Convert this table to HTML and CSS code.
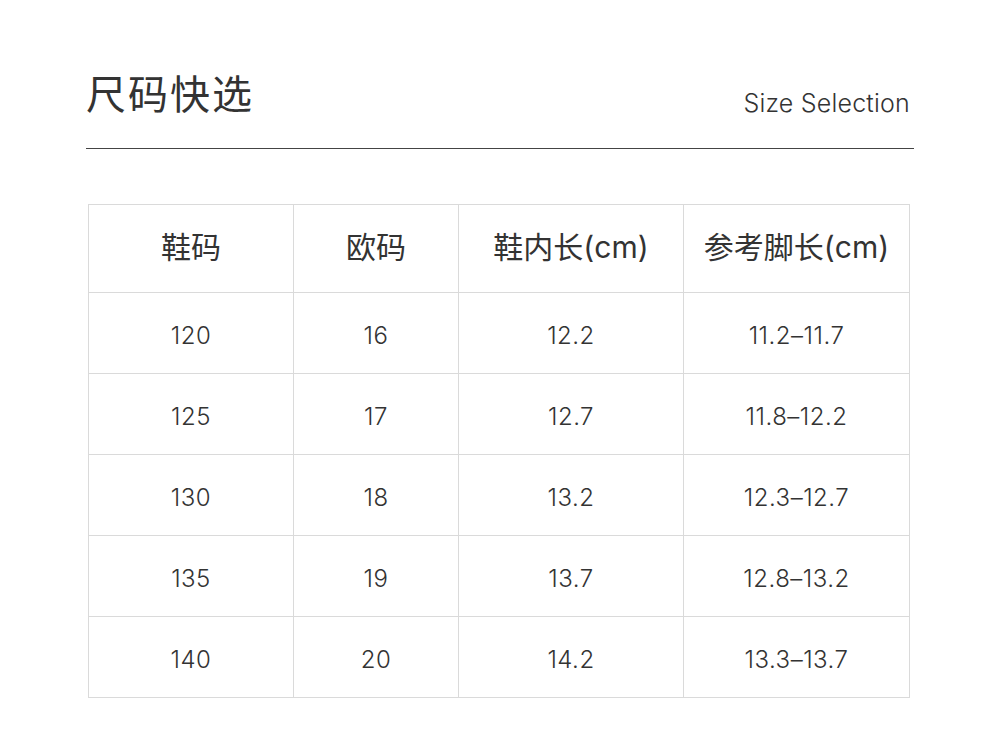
FILE: index.html
```html
<!DOCTYPE html>
<html lang="zh">
<head>
<meta charset="utf-8">
<link rel="stylesheet" href="styles.css">
</head>
<body>
<div class="page">
  <div class="head">
    <h1 class="title">尺码快选</h1>
    <div class="subtitle">Size Selection</div>
  </div>
  <table class="sizes">
    <colgroup>
      <col class="c1"><col class="c2"><col class="c3"><col class="c4">
    </colgroup>
    <thead>
      <tr><th>鞋码</th><th>欧码</th><th>鞋内长(cm)</th><th>参考脚长(cm)</th></tr>
    </thead>
    <tbody>
      <tr><td>120</td><td>16</td><td>12.2</td><td>11.2–11.7</td></tr>
      <tr><td>125</td><td>17</td><td>12.7</td><td>11.8–12.2</td></tr>
      <tr><td>130</td><td>18</td><td>13.2</td><td>12.3–12.7</td></tr>
      <tr><td>135</td><td>19</td><td>13.7</td><td>12.8–13.2</td></tr>
      <tr><td>140</td><td>20</td><td>14.2</td><td>13.3–13.7</td></tr>
    </tbody>
  </table>
</div>
</body>
</html>
```
FILE: styles.css
```css
html, body {
  margin: 0;
  padding: 0;
  background: #ffffff;
}
body {
  font-family: Inter, "Noto Sans CJK SC", sans-serif;
  color: #333333;
}
.page {
  width: 828px;
  margin-left: 86px;
  padding-top: 70px;
}
.head {
  display: flex;
  justify-content: space-between;
  align-items: flex-end;
  border-bottom: 1px solid #444444;
  padding-bottom: 34px;
}
.title {
  margin: 0;
  font-family: "Noto Sans CJK SC", sans-serif;
  font-weight: 400;
  font-size: 40px;
  line-height: 44px;
  letter-spacing: 2px;
  color: #333333;
}
.subtitle {
  font-size: 25px;
  line-height: 30px;
  margin-right: 4px;
  margin-bottom: -4px;
  color: #333333;
  font-weight: 350;
  letter-spacing: 0.2px;
}
.sizes {
  margin-top: 55px;
  margin-left: 2px;
  border-collapse: collapse;
  width: 821px;
  table-layout: fixed;
}
.c1 { width: 205px; }
.c2 { width: 165px; }
.c3 { width: 225px; }
.c4 { width: 226px; }
.sizes th, .sizes td {
  border: 1px solid #dadada;
  text-align: center;
  padding: 0;
  color: #333333;
  box-sizing: border-box;
}
.sizes th {
  height: 88px;
  padding-bottom: 8px;
  font-weight: 400;
  font-size: 30px;
  font-family: Inter, "Noto Sans CJK SC", sans-serif;
}
.sizes td {
  height: 81px;
  padding-top: 5px;
  font-size: 24px;
  font-weight: 350;
  letter-spacing: 0.5px;
}
```
